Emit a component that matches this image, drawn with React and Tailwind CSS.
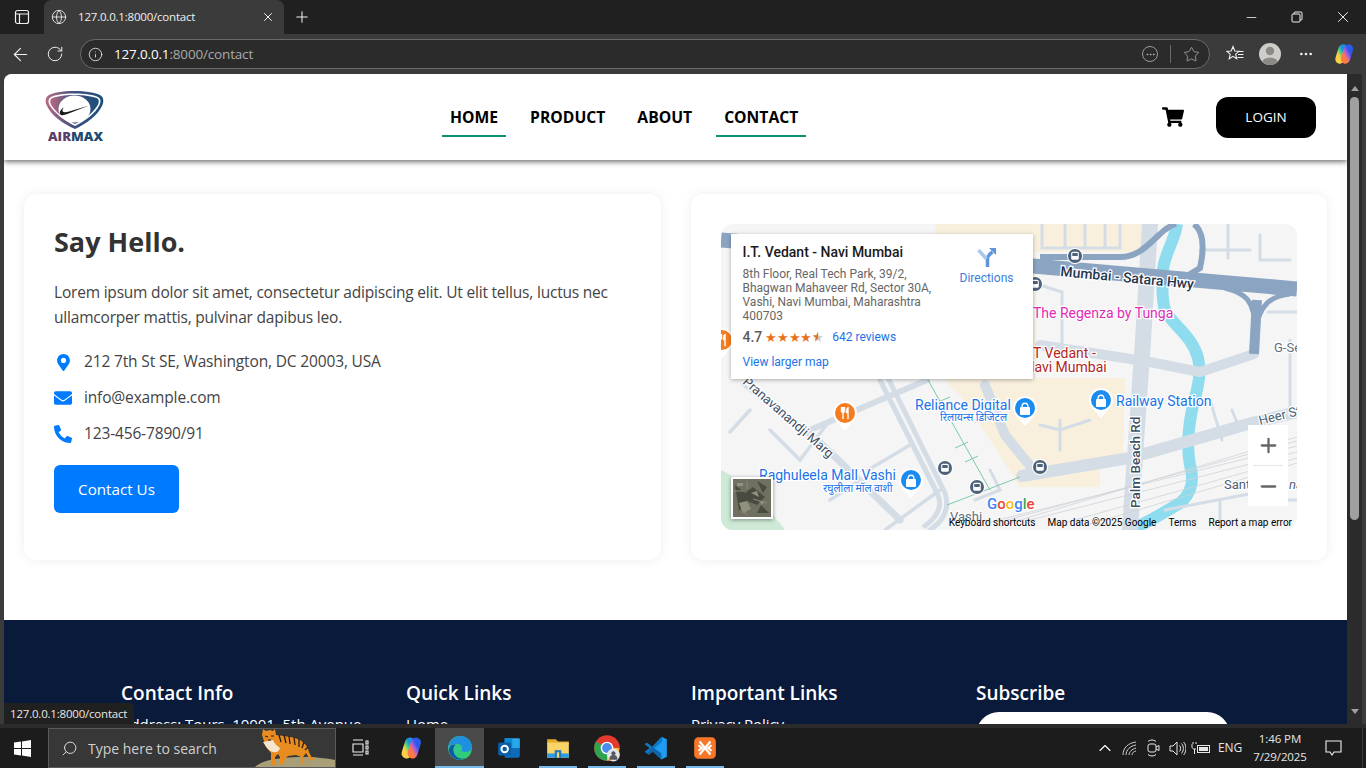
import React from 'react';
import { FaMapMarkerAlt, FaEnvelope, FaPhoneAlt, FaShoppingCart } from 'react-icons/fa';
import { Globe, X, Plus, ArrowLeft, RotateCw, Info, Star, MoreHorizontal, Minus, ChevronUp, Search } from 'lucide-react';

const uiFont = { fontFamily: '"Open Sans", sans-serif' };

function CopilotLogo({ size = 22, id = 'cop' }) {
    return (
        <svg width={size} height={size} viewBox="0 0 24 24" fill="none" strokeLinecap="round">
            <defs>
                <linearGradient id={`${id}A`} x1="0.8" y1="0" x2="0.2" y2="1">
                    <stop offset="0" stopColor="#1b8fe0" />
                    <stop offset="0.45" stopColor="#3ccf8a" />
                    <stop offset="1" stopColor="#f7d147" />
                </linearGradient>
                <linearGradient id={`${id}B`} x1="0.8" y1="0" x2="0.2" y2="1">
                    <stop offset="0" stopColor="#2a5be8" />
                    <stop offset="0.5" stopColor="#b25be0" />
                    <stop offset="1" stopColor="#ff7a45" />
                </linearGradient>
            </defs>
            <path d="M11 6.500 7.500 17.500" stroke={`url(#${id}A)`} strokeWidth="10" />
            <path d="M17 6.500 13.500 17.500" stroke={`url(#${id}B)`} strokeWidth="10" />
        </svg>
    );
}

function EdgeLogo() {
    return (
        <svg width="26" height="26" viewBox="0 0 24 24">
            <defs>
                <linearGradient id="edgeA" x1="0" y1="0" x2="1" y2="1">
                    <stop offset="0" stopColor="#35c1a0" />
                    <stop offset="1" stopColor="#2fd06a" />
                </linearGradient>
            </defs>
            <circle cx="12" cy="12" r="11" fill="url(#edgeA)" />
            <path d="M1 12C2 5 8 1 12 1c6 0 11 4 11 10 0 3-3 4.500-6 4.500-2 0-4-.7-4-1.500 2-1 1-6-4-6-4 0-7 2-8 4z" fill="#1f8fe0" />
            <path d="M8 9c-3 2-3 8 1 11 1.500 1.200 4 2.500 8 1.500-5 3-13 1-15-6C1 12 4 8 8 9z" fill="#0c59a4" />
        </svg>
    );
}

function OutlookLogo() {
    return (
        <svg width="26" height="26" viewBox="0 0 24 24">
            <path d="M8 3h13a1 1 0 0 1 1 1v8H8z" fill="#28a8ea" />
            <path d="M8 12h14v7a2 2 0 0 1-2 2H8z" fill="#0f6cbd" />
            <path d="M8 3h7v9H8z" fill="#0a8ad6" />
            <rect x="2" y="7" width="12" height="12" rx="1.500" fill="#0a5fa8" />
            <circle cx="8" cy="13" r="3" fill="none" stroke="#fff" strokeWidth="1.800" />
        </svg>
    );
}

function FolderLogo() {
    return (
        <svg width="26" height="26" viewBox="0 0 24 24">
            <path d="M2 4h8l2 2h10v3H2z" fill="#e5a92e" />
            <rect x="2" y="7" width="20" height="14" fill="#f8d568" />
            <rect x="2" y="17" width="20" height="4" fill="#2f9be0" />
            <rect x="9" y="14" width="6" height="7" fill="#1f78c4" />
            <rect x="11" y="16" width="2" height="5" fill="#f8d568" />
        </svg>
    );
}

function ChromeLogo() {
    return (
        <svg width="28" height="28" viewBox="0 0 24 24">
            <circle cx="12" cy="12" r="11" fill="#e33b2e" />
            <path d="M12 12 2.500 6.500A11 11 0 0 0 12 23z" fill="#2fa34f" />
            <path d="M12 12h10.500A11 11 0 0 1 12 23z" fill="#fbc02d" />
            <circle cx="12" cy="12" r="5.400" fill="#fff" />
            <circle cx="12" cy="12" r="4.200" fill="#4a8bf0" />
            <circle cx="17.500" cy="18" r="5.500" fill="#e2e4e8" />
            <circle cx="17.500" cy="16.500" r="1.800" fill="#55585e" />
            <path d="M14 22c0-3 1.500-4 3.500-4s3.500 1 3.500 4z" fill="#55585e" />
        </svg>
    );
}

function VsCodeLogo() {
    return (
        <svg width="26" height="26" viewBox="0 0 24 24">
            <path d="M17 1.500 22 4v16l-5 2.500L6.500 13 17 5.500z" fill="#1f9cf0" />
            <path d="M17 1.500V7l-8.500 6.500L3.500 17 1.500 15.500 6 12 1.500 8.500l2-1.500 5 3.800z" fill="#0b7ac4" />
            <path d="M17 22.500V17l-8.500-6.500-5 6.500 2 1.500 3.500-3z" fill="#0d66ad" />
        </svg>
    );
}

function XamppLogo() {
    return (
        <svg width="26" height="26" viewBox="0 0 24 24">
            <rect x="2" y="2" width="20" height="20" rx="4" fill="#f9772b" />
            <path d="M7 6l5 6 5-6M7 18l5-6 5 6M6 9.500l3 2.500-3 2.500M18 9.500 15 12l3 2.500" fill="none" stroke="#fff" strokeWidth="2" />
        </svg>
    );
}

function Tiger() {
    return (
        <svg width="80" height="40" viewBox="0 0 80 40">
            <path d="M0 40C8 32 30 30 50 30c14 0 24 2 30 3v7z" fill="#a89f78" />
            <path d="M7 8l1-6 3 2 4-1 3 1 2-2 1 6c8 1 18 2 24 5 5 3 8 7 9 12l3 6 3-1-1 3-4 0-4-7-3 4 1 6 2 1H47l-1-7-5-2-8 1-3 3-1 4 2 1H25l0-7-2-3-3 3 0 7h2l0 1h-6l0-12-5-6z" fill="#e88c22" />
            <path d="M8 15c3 5 6 9 10 10 4 1 6-1 7-4-3-2-6-5-7-8z" fill="#f5e6d2" />
            <path d="M24 8l2 7M29 8l2 8M34 9l1 8M39 10l1 8M44 12l0 8M49 15l-2 6M53 20l-3 3" stroke="#2a1c10" strokeWidth="1.300" fill="none" />
            <path d="M10 9l3 1M16 9l3 0M13 13l3 0" stroke="#2a1c10" strokeWidth="1" />
        </svg>
    );
}

function BrowserChrome() {
    return (
        <>
            <div className="flex h-[34px] shrink-0 items-end bg-[#202020] text-[#f0f0f0]">
                <div className="flex h-[34px] w-[44px] shrink-0 items-center justify-center">
                    <svg width="16" height="16" viewBox="0 0 16 16" fill="none" stroke="#f0f0f0" strokeWidth="1.200">
                        <rect x="1.500" y="1.500" width="13" height="13" rx="2" />
                        <path d="M1.500 5h13M5.500 5v9.500" />
                    </svg>
                </div>
                <div className="flex h-[34px] w-[240px] shrink-0 items-center rounded-t-lg bg-[#3b3b3b] pl-[7px] pr-[9px]">
                    <Globe size={16} strokeWidth={1.300} />
                    <span className="ml-[11px] flex-1 pb-[1px] text-[11.5px] tracking-[-0.2px]">127.0.0.1:8000/contact</span>
                    <X size={14} strokeWidth={1.700} />
                </div>
                <div className="flex h-[34px] w-[36px] items-center justify-center">
                    <Plus size={18} strokeWidth={1.400} />
                </div>
                <div className="flex-1" />
                <div className="flex h-[34px] items-center">
                    <div className="flex w-[46px] justify-center"><Minus size={15} strokeWidth={1.300} /></div>
                    <div className="flex w-[46px] justify-center">
                        <svg width="12" height="12" viewBox="0 0 12 12" fill="none" stroke="#f0f0f0">
                            <rect x="1" y="3" width="8" height="8" rx="1" />
                            <path d="M3 3V2a1 1 0 0 1 1-1h6a1 1 0 0 1 1 1v6a1 1 0 0 1-1 1H9" />
                        </svg>
                    </div>
                    <div className="flex w-[46px] justify-center"><X size={18} strokeWidth={1.300} /></div>
                </div>
            </div>
            <div className="flex h-[40px] shrink-0 items-center bg-[#3b3b3b] text-[#f0f0f0]">
                <div className="flex w-[38px] justify-center pl-[2px]"><ArrowLeft size={21} strokeWidth={1.300} /></div>
                <div className="flex w-[34px] justify-center"><RotateCw size={18} strokeWidth={1.300} /></div>
                <div className="ml-[8px] flex h-[30px] w-[1130px] items-center rounded-[15px] border border-[#6a6a6a] bg-[#2b2b2b] pl-[7px] pr-[8px]">
                    <Info size={15} strokeWidth={1.300} />
                    <span className="ml-[11px] flex-1 text-[13.5px] tracking-[-0.17px] text-[#a9a9a9]"><span className="text-white">127.0.0.1</span>:8000/contact</span>
                    <div className="flex h-[16px] w-[16px] items-center justify-center rounded-full border border-[#9a9a9a]">
                        <MoreHorizontal size={11} className="text-[#b0b0b0]" />
                    </div>
                    <div className="mx-[12px] h-[18px] w-px bg-[#6a6a6a]" />
                    <Star size={17} strokeWidth={1.100} className="mr-[1px] text-[#b0b0b0]" />
                </div>
                <div className="flex flex-1 items-center">
                    <div className="flex w-[48px] justify-center pl-[2px]">
                        <svg width="18" height="18" viewBox="0 0 18 18" fill="none" stroke="#f0f0f0" strokeWidth="1.100">
                            <path d="M7 1.500 8.800 6l4.200.3-3.300 2.900 1 4.600L7 11.300l-3.800 2.500 1-4.600L1 6.300 5.200 6z" />
                            <path d="M13 6.500h4.500M12 9.500h5.500M11.500 12.500h6" />
                        </svg>
                    </div>
                    <div className="ml-[1px] flex h-[22px] w-[22px] items-center justify-center overflow-hidden rounded-full bg-[#cfcdc9]">
                        <svg width="22" height="22" viewBox="0 0 22 22">
                            <circle cx="11" cy="8" r="4.200" fill="#8c8a86" />
                            <ellipse cx="11" cy="20" rx="8" ry="5.500" fill="#8c8a86" />
                        </svg>
                    </div>
                    <div className="flex w-[50px] justify-center"><MoreHorizontal size={16} strokeWidth={2} /></div>
                    <div className="flex w-[26px] justify-center"><CopilotLogo id="copTop" /></div>
                </div>
            </div>
        </>
    );
}

function NavItem({ label, active }) {
    return (
        <a className={`block border-b-2 px-[8px] pb-[5px] pt-[7px] text-[15.7px] font-bold text-black ${active ? 'border-[#0d9276]' : 'border-transparent'}`}>
            {label}
        </a>
    );
}

function AirMaxLogo() {
    return (
        <svg width="62" height="54" viewBox="0 0 62 54">
            <defs>
                <linearGradient id="shield" x1="0" y1="0" x2="1" y2="0">
                    <stop offset="0" stopColor="#b86a80" />
                    <stop offset="0.5" stopColor="#3f4f80" />
                    <stop offset="1" stopColor="#1c4f7c" />
                </linearGradient>
            </defs>
            <path d="M30 1C42 1 52 3 56 5 60 7 60 12 58 16 54 25 42 34 31 39 19 34 7 25 3 16 1 12 1 7 5 5 9 3 18 1 30 1z" fill="url(#shield)" />
            <path d="M30 3.500C41 3.500 50 5 54 7 57 8.500 57 12 55.500 15 52 23 41 31 31 36 21 31 10 23 5.500 15 4 12 4 8.500 7 7 11 5 19 3.500 30 3.500z" fill="#fff" />
            <path d="M30 5C40 5 49 6.500 52.500 8 55.500 9.500 55 12 54 14.500 50 22 41 29 31 34 21 29 11 22 7 14.500 6 12 5.500 9.500 8.500 8 12 6.500 20 5 30 5z" fill="url(#shield)" />
            <ellipse cx="30.500" cy="19" rx="16" ry="13.500" fill="#fff" />
            <path d="M45 15.500 25 21.500c-4 1.100-6.500 1-6.500-1 0-1.300.8-2.500 2-3.500-3 1.500-5.500 4.500-4.500 7 .8 1.800 4 1.500 8-.2z" fill="#1d1d1f" />
            <text x="4" y="51" fontSize="11.500" fontWeight="800" fontFamily="'Open Sans', sans-serif" textLength="55" lengthAdjust="spacingAndGlyphs">
                <tspan fill="#5b3f68">AIR</tspan><tspan fill="#21486e">MAX</tspan>
            </text>
        </svg>
    );
}

function Navbar() {
    return (
        <div className="relative z-10 flex h-[86px] items-center bg-white shadow-[0_2px_5px_rgba(0,0,0,0.55)]">
            <div className="ml-[40px] flex w-[398px] shrink-0 items-center"><AirMaxLogo /></div>
            <nav className="flex items-center gap-[16px] pt-[2px]">
                <NavItem label="HOME" active />
                <NavItem label="PRODUCT" />
                <NavItem label="ABOUT" />
                <NavItem label="CONTACT" active />
            </nav>
            <div className="flex-1" />
            <FaShoppingCart size={22} className="text-black" />
            <button className="ml-[32px] mr-[31px] h-[41px] w-[100px] rounded-[12px] bg-black text-[13.5px] text-white">LOGIN</button>
        </div>
    );
}

function ContactRow({ icon, children }) {
    return (
        <div className="flex h-[36px] items-center text-[15.5px] tracking-[-0.15px] text-[#444]">
            <span className="flex w-[30px] text-[#007bff]">{icon}</span>
            {children}
        </div>
    );
}

function ContactCard() {
    return (
        <div className="rounded-[12px] bg-white p-[30px] shadow-[0_0_12px_rgba(0,0,0,0.07)]">
            <h2 className="text-[27px] font-bold leading-[36px] text-[#333]">Say Hello.</h2>
            <p className="mt-[20px] text-[15.5px] leading-[25px] tracking-[-0.2px] text-[#444]">
                Lorem ipsum dolor sit amet, consectetur adipiscing elit. Ut elit tellus, luctus nec ullamcorper mattis, pulvinar dapibus leo.
            </p>
            <div className="mt-[14px]">
                <ContactRow icon={<FaMapMarkerAlt size={17} className="ml-[1px]" />}>212 7th St SE, Washington, DC 20003, USA</ContactRow>
                <ContactRow icon={<FaEnvelope size={18} />}>info@example.com</ContactRow>
                <ContactRow icon={<FaPhoneAlt size={18} />}>123-456-7890/91</ContactRow>
            </div>
            <button className="mt-[13px] h-[48px] w-[125px] rounded-[6px] bg-[#007bff] text-[15.2px] text-white">Contact Us</button>
        </div>
    );
}

function Pin({ x, y, color, kind }) {
    return (
        <g transform={`translate(${x} ${y})`}>
            <path d="M0 13 -9 3A12 12 0 1 1 9 3z" fill="#fff" transform="translate(0 -3)" />
            <circle cx="0" cy="-8" r="10" fill={color} />
            {kind === 'bag' ? (
                <g>
                    <rect x="-5" y="-9" width="10" height="8" rx="1" fill="#fff" />
                    <path d="M-3-9c0-5 6-5 6 0" fill="none" stroke="#fff" strokeWidth="1.300" />
                </g>
            ) : (
                <path d="M-4-14v4c0 1 1 2 1.500 2v6h1v-6c.5 0 1.500-1 1.500-2v-4M3-14c-2 1-2 4-2 6h1.500v6h1v-12z" fill="#fff" stroke="#fff" strokeWidth="0.400" />
            )}
        </g>
    );
}

function Bus({ x, y }) {
    return (
        <g transform={`translate(${x} ${y})`}>
            <circle r="8" fill="#fff" />
            <circle r="7" fill="#4d6178" />
            <rect x="-3.800" y="-4.200" width="7.600" height="8" rx="1.500" fill="#fff" />
            <rect x="-2.700" y="-3" width="5.400" height="3" fill="#4d6178" />
        </g>
    );
}

function MapDrawing() {
    const label = { fontFamily: 'Roboto, sans-serif' };
    const halo = { paintOrder: 'stroke', stroke: '#fff', strokeWidth: 2.5 };
    return (
        <svg className="absolute inset-0" width="576" height="306" viewBox="721 224 576 306" style={label}>
            <rect x="721" y="224" width="576" height="306" fill="#f5f5f5" />
            <path d="M721 470 C745 480 770 510 785 530 H721z" fill="#ceead6" />
            <path d="M935 224H1150L1147 252H1035V378H1125L1123 460 1100 470V487H1020L990 440 960 395 945 380z" fill="#f8f0dd" />
            <path d="M1177 224C1175 240 1164 255 1163 270 1162 285 1162 300 1165 310 1172 325 1192 335 1198 358 1202 375 1197 390 1192 410 1188 430 1187 450 1190 465 1195 482 1190 495 1180 503 1165 512 1145 524 1130 530" fill="none" stroke="#8fdcee" strokeWidth="12" />
            <g fill="none" stroke="#d4dde6" strokeLinecap="round">
                <path d="M1150 224 1143 340 1130 530" strokeWidth="16" />
                <path d="M1040 345 1150 362 1200 372 1254 354" strokeWidth="10" />
                <path d="M1022 476 1130 458 1248 424 1297 412" strokeWidth="12" />
                <path d="M985 385 1005 435 1035 472" strokeWidth="10" />
                <path d="M880 380 937 493Q946 510 925 526" strokeWidth="5" />
                <path d="M888 378 945 493Q952 515 930 530" strokeWidth="5" />
                <path d="M810 430 927 380" strokeWidth="6" />
                <path d="M830 452 900 520" strokeWidth="7" />
                <path d="M742 384 830 452" strokeWidth="3" />
                <path d="M770 430 800 460 830 420M750 410 730 432M820 440 850 470M830 500 860 480M868 470 910 445M885 530 940 490" strokeWidth="3.500" />
                <path d="M1042 224V248H1120V224M1065 224V248M1085 224V248M1105 224V248M1040 285 1062 292V345M1200 250H1250M1260 235V260H1290M1228 224V258" strokeWidth="3" />
                <path d="M1210 400 1222 440M1232 410 1240 430M1090 420 1060 430 1040 425M1060 420V450M1220 500V530M1270 500H1297M1165 510 1270 490" strokeWidth="3" />
                <path d="M990 470 1000 490 975 500M1290 340V412M1268 312H1297" strokeWidth="3" />
            </g>
            <g fill="none" stroke="#cfd3d8" strokeWidth="0.800">
                <path d="M1000 526 1297 437M1000 522 1297 441M990 522 1297 446M1030 520 1297 452M1060 524 1297 458M1090 524 1297 463" />
            </g>
            <g fill="none" stroke="#8ba4c2" strokeLinecap="butt">
                <path d="M721 240 1033 266 1297 289" strokeWidth="15" />
                <path d="M1257 300 1254 354" strokeWidth="10" />
                <path d="M1225 288C1245 293 1255 300 1255 330M1290 294C1270 296 1260 305 1255 330" strokeWidth="5" />
                <path d="M1040 257H1120C1138 257 1148 245 1160 234 1164 230 1170 226 1176 224M1194 224C1204 232 1204 250 1200 268L1190 274" strokeWidth="6" />
            </g>
            <path d="M928 380 990 490M947 505 1020 477M938 402 950 397M955 448 968 442M965 462 978 456" fill="none" stroke="#7ccaa9" strokeWidth="1" />
            <text x="1060" y="276" transform="rotate(5.500 1060 276)" fontSize="14" fontWeight="500" fill="#25364f" style={halo}>Mumbai - Satara Hwy</text>
            <text x="1033" y="318" fontSize="14" fill="#e22bb6" style={halo}>The Regenza by Tunga</text>
            <text x="1033" y="358" fontSize="14" fill="#b3261e" style={halo}>T Vedant -</text>
            <text x="1031" y="372" fontSize="14" fill="#b3261e" style={halo}>lavi Mumbai</text>
            <text x="1274" y="352" fontSize="13" fill="#5f6f80" style={halo}>G-Se</text>
            <text x="915" y="410" fontSize="14" fill="#1a73e8" style={halo}>Reliance Digital</text>
            <text x="940" y="421" fontSize="10.500" fill="#1a73e8" style={halo} fontFamily="'Noto Sans CJK SC', 'Noto Sans', sans-serif">रिलायन्स डिजिटल</text>
            <text x="1116" y="406" fontSize="14" fill="#1a73e8" style={halo}>Railway Station</text>
            <text x="759" y="480" fontSize="14" fill="#1a73e8" style={halo}>Raghuleela Mall Vashi</text>
            <text x="823" y="492" fontSize="10.500" fill="#1a73e8" style={halo} fontFamily="'Noto Sans CJK SC', 'Noto Sans', sans-serif">रघुलीला मॉल वाशी</text>
            <text x="742" y="383" transform="rotate(41 742 383)" fontSize="13" fill="#3e4e62" style={halo}>Pranavanandji Marg</text>
            <text x="1140" y="508" transform="rotate(-90 1140 508)" fontSize="13.500" fontWeight="500" fill="#3e4e62" style={halo}>Palm Beach Rd</text>
            <text x="1224" y="489" fontSize="13" fill="#4d5f75" style={halo}>Sant</text>
            <text x="1289" y="489" fontSize="13" fill="#4d5f75" fontStyle="italic" style={halo}>na</text>
            <text x="1260" y="425" transform="rotate(-14 1260 425)" fontSize="13" fill="#4d5f75" style={halo}>Heer St</text>
            <text x="950" y="521" fontSize="13" fill="#5f6f80" style={halo}>Vashi</text>
            <text x="987" y="509" fontSize="15" fontWeight="500" style={halo}>
                <tspan fill="#4285f4">G</tspan><tspan fill="#ea4335">o</tspan><tspan fill="#fbbc05">o</tspan><tspan fill="#4285f4">g</tspan><tspan fill="#34a853">l</tspan><tspan fill="#ea4335">e</tspan>
            </text>
            <Pin x={845} y={421} color="#f57c1f" kind="food" />
            <Pin x={1025} y={416} color="#1a8cf0" kind="bag" />
            <Pin x={1101} y={408} color="#1a8cf0" kind="bag" />
            <Pin x={911} y={488} color="#1a8cf0" kind="bag" />
            <Pin x={722} y={348} color="#f57c1f" kind="food" />
            <Bus x={1075} y={256} />
            <Bus x={1035} y={284} />
            <Bus x={945} y={468} />
            <Bus x={977} y={487} />
            <Bus x={1040} y={467} />
        </svg>
    );
}

function StarsRow() {
    return (
        <span className="relative ml-[3px] inline-block text-[13px] leading-none tracking-[-0.4px] text-[#e7711b]">
            ★★★★<span className="relative text-[#c9c9c9]">★<span className="absolute left-0 top-0 w-[6px] overflow-hidden text-[#e7711b]">★</span></span>
        </span>
    );
}

function InfoWindow() {
    return (
        <div className="absolute left-[10px] top-[10px] flex h-[145px] w-[302px] bg-white pl-[12px] pt-[10px] shadow-[0_1px_4px_rgba(0,0,0,0.3)]" style={{ fontFamily: 'Roboto, sans-serif' }}>
            <div className="w-[198px]">
                <div className="text-[14px] font-medium leading-[17px] text-[#1a1a1a]">I.T. Vedant - Navi Mumbai</div>
                <div className="mt-[6px] w-[192px] text-[12px] leading-[14px] text-[#666]">8th Floor, Real Tech Park, 39/2, Bhagwan Mahaveer Rd, Sector 30A, Vashi, Navi Mumbai, Maharashtra 400703</div>
                <div className="mt-[6px] flex h-[16px] items-center text-[14px] font-medium text-[#5b5b5b]">
                    4.7<StarsRow /><span className="ml-[9px] text-[12px] font-normal text-[#1a73e8]">642 reviews</span>
                </div>
                <div className="mt-[8px] text-[12px] text-[#1a73e8]">View larger map</div>
            </div>
            <div className="flex flex-1 flex-col items-center pt-[3px] text-[12px] text-[#3b7ddd]">
                <svg width="20" height="20" viewBox="0 0 20 20" fill="none" stroke="#5d94dc" strokeWidth="3.500">
                    <path d="M10.500 20v-8c0-3 2-5 5-7" />
                    <path d="M12 1h7v7z" fill="#5d94dc" stroke="none" />
                    <path d="M9.500 12 1.500 3" stroke="#a9c8ef" strokeWidth="3.500" />
                </svg>
                <span className="mt-[2px]">Directions</span>
            </div>
        </div>
    );
}

function GoogleMap() {
    return (
        <div className="relative h-[306px] overflow-hidden rounded-[12px]">
            <MapDrawing />
            <InfoWindow />
            <div className="absolute left-[10px] top-[253px] h-[42px] w-[42px] border-2 border-white bg-[#6b6a5c] shadow-[0_1px_4px_rgba(0,0,0,0.4)]">
                <svg width="38" height="38" viewBox="0 0 38 38">
                    <rect width="38" height="38" fill="#6f7060" />
                    <path d="M2 6l10 8 8-6 12 10-8 8-10-4-8 10zM24 2l10 6-4 6zM28 26l8 8H24z" fill="#4a4b40" />
                    <path d="M6 24l8-2 4 8-8 4zM18 14l6-2 2 6zM4 4h6v3H4zM26 22l5 1-2 3z" fill="#92917f" />
                    <path d="M0 12h10M14 2v8M20 20l14 4M8 30l6 6" stroke="#8b8a78" strokeWidth="1" />
                </svg>
            </div>
            <div className="absolute right-[9px] top-[201px] flex h-[81px] w-[40px] flex-col items-center bg-white text-[#666]">
                <div className="flex h-[40px] items-center justify-center"><Plus size={23} strokeWidth={2.400} /></div>
                <div className="h-px w-[30px] bg-[#e6e6e6]" />
                <div className="flex h-[40px] items-center justify-center"><Minus size={23} strokeWidth={2.400} /></div>
            </div>
            <div className="absolute bottom-[1px] right-0 flex h-[14px] items-center gap-[12px] pr-[5px] text-[10px] text-black" style={{ fontFamily: 'Roboto, sans-serif' }}>
                <span>Keyboard shortcuts</span>
                <span>Map data ©2025 Google</span>
                <span>Terms</span>
                <span>Report a map error</span>
            </div>
        </div>
    );
}

function Footer() {
    const cols = [
        ['Contact Info', 'Address: Tours, 10001, 5th Avenue'],
        ['Quick Links', 'Home'],
        ['Important Links', 'Privacy Policy'],
    ];
    return (
        <footer className="bg-[#0a1a3a] pt-[60px] text-white">
            <div className="ml-[117px] grid h-[300px] grid-cols-[repeat(4,285px)]">
                {cols.map(([title, first]) => (
                    <div key={title}>
                        <h4 className="text-[19px] font-semibold leading-[27px]">{title}</h4>
                        <p className="mt-[6px] text-[15px] tracking-[-0.05px]">{first}</p>
                    </div>
                ))}
                <div>
                    <h4 className="text-[19px] font-semibold leading-[27px]">Subscribe</h4>
                    <div className="mt-[5px] h-[46px] w-[254px] rounded-[23px] bg-white" />
                </div>
            </div>
        </footer>
    );
}

function Scrollbar() {
    return (
        <div className="flex w-[15px] shrink-0 flex-col items-center bg-[#2b2b2b]">
            <div className="flex h-[23px] items-end justify-center pb-[6px]">
                <div className="h-0 w-0 border-x-[4px] border-b-[5px] border-x-transparent border-b-[#a0a0a0]" />
            </div>
            <div className="h-[423px] w-[9px] rounded-full bg-[#a0a0a0]" />
            <div className="flex flex-1 items-end justify-center pb-[10px]">
                <div className="h-0 w-0 border-x-[4px] border-t-[5px] border-x-transparent border-t-[#a0a0a0]" />
            </div>
        </div>
    );
}

function TaskIcon({ children, active, line }) {
    return (
        <div className={`relative flex h-[40px] w-[49px] shrink-0 items-center justify-center ${active ? 'bg-[#4a4a4a]' : ''}`}>
            {children}
            {line && <div className={`absolute bottom-0 h-[2px] bg-[#76b9ed] ${active ? 'w-full' : 'w-[38px]'}`} />}
        </div>
    );
}

function TraySlot({ children }) {
    return <div className="flex w-[24px] shrink-0 justify-center">{children}</div>;
}

function Taskbar() {
    return (
        <div className="flex h-[40px] shrink-0 items-center bg-[#1c1c1c] text-white">
            <div className="flex w-[48px] shrink-0 justify-center pr-[4px]">
                <svg width="17" height="17" viewBox="0 0 17 17" fill="#fff">
                    <path d="M0 2.500 7 1.500V8H0zM8 1.400 17 0V8H8zM0 9h7v6.500L0 14.500zM8 9h9v8l-9-1.400z" />
                </svg>
            </div>
            <div className="relative flex h-[40px] w-[288px] shrink-0 items-center overflow-hidden border border-[#5a5a5a] bg-[#373737] pl-[12px]">
                <Search size={17} strokeWidth={1.300} className="-scale-x-100 text-[#e8e8e8]" />
                <span className="ml-[10px] text-[14px] text-[#cfcfcf]">Type here to search</span>
                <div className="absolute bottom-0 right-0"><Tiger /></div>
            </div>
            <div className="w-[1px] shrink-0" />
            <TaskIcon>
                <div className="pr-[4px]">
                    <svg width="18" height="18" viewBox="0 0 18 18" fill="none" stroke="#f0f0f0" strokeWidth="1.100">
                        <path d="M2 1h10M2 16h10M2 5h10v8H2zM15 2h2v3h-2zM15 7h2v3h-2zM15 12h2v3h-2z" />
                    </svg>
                </div>
            </TaskIcon>
            <TaskIcon><CopilotLogo size={24} id="copBar" /></TaskIcon>
            <TaskIcon active line><EdgeLogo /></TaskIcon>
            <TaskIcon><OutlookLogo /></TaskIcon>
            <TaskIcon line><FolderLogo /></TaskIcon>
            <TaskIcon line><ChromeLogo /></TaskIcon>
            <TaskIcon line><VsCodeLogo /></TaskIcon>
            <TaskIcon line><XamppLogo /></TaskIcon>
            <div className="flex-1" />
            <TraySlot><ChevronUp size={20} strokeWidth={1.300} /></TraySlot>
            <TraySlot>
                <svg width="15" height="15" viewBox="0 0 15 15" fill="none" stroke="#cfcfcf" strokeWidth="1">
                    <path d="M1 14C1 7 6 2 14 1M4 14c0-5 4-9 10-10M7 14c0-3 3-6 7-7M10 14c0-2 2-4 4-4" />
                </svg>
            </TraySlot>
            <TraySlot>
                <svg width="14" height="18" viewBox="0 0 14 18" fill="none" stroke="#e6e6e6" strokeWidth="1">
                    <rect x="2" y="5" width="8" height="8" rx="2" />
                    <path d="M10 8l3-1.500v5L10 10M2 2.500c2-2 6-2 8 0M2 15.500c2 2 6 2 8 0" />
                </svg>
            </TraySlot>
            <TraySlot>
                <svg width="17" height="15" viewBox="0 0 17 15" fill="none" stroke="#e6e6e6" strokeWidth="1">
                    <path d="M1 5h3l4-4v13L4 10H1zM10.500 4.500c1.500 1.500 1.500 4.500 0 6M12.500 2.500c2.500 3 2.500 7 0 10M14.700 1c3 4 3 9 0 13" />
                </svg>
            </TraySlot>
            <TraySlot>
                <svg width="20" height="13" viewBox="0 0 20 13" fill="none" stroke="#e6e6e6" strokeWidth="1">
                    <rect x="6.500" y="3.500" width="12" height="7" />
                    <rect x="8" y="5" width="9" height="4" fill="#e6e6e6" stroke="none" />
                    <path d="M1 2v3c0 1 1 2 2 2h2M2 0v2M5 0v2M3.500 7v5" />
                </svg>
            </TraySlot>
            <span className="w-[34px] text-center text-[12px] tracking-[-0.2px] text-[#e6e6e6]">ENG</span>
            <div className="ml-[3px] w-[60px] text-center text-[11.5px] leading-[18px] tracking-[-0.1px] text-[#e6e6e6]">
                <div>1:46 PM</div>
                <div>7/29/2025</div>
            </div>
            <div className="flex w-[52px] justify-center pr-[6px]">
                <svg width="17" height="16" viewBox="0 0 17 16" fill="none" stroke="#f0f0f0" strokeWidth="1.100">
                    <path d="M1 1h15v11H9l-2 3-2-3H1z" />
                </svg>
            </div>
            <div className="h-[40px] w-[4px] border-l border-[#3a3a3a]" />
        </div>
    );
}

export default function App() {
    return (
        <div className="flex h-[768px] w-[1366px] flex-col overflow-hidden bg-[#1c1c1c]" style={uiFont}>
            <BrowserChrome />
            <div className="relative flex h-[650px] shrink-0 bg-[#3b3b3b] px-[4px]">
                <div className="flex-1 overflow-hidden rounded-tl-lg bg-white">
                    <Navbar />
                    <div className="grid grid-cols-2 gap-[30px] px-[20px] pb-[60px] pt-[34px]">
                        <ContactCard />
                        <div className="rounded-[12px] bg-white p-[30px] shadow-[0_0_12px_rgba(0,0,0,0.07)]">
                            <GoogleMap />
                        </div>
                    </div>
                    <Footer />
                </div>
                <Scrollbar />
                <div className="absolute bottom-0 left-[4px] flex h-[21px] w-[130px] items-center rounded-tr bg-[#202020] pl-[6px] text-[11.5px] tracking-[-0.2px] text-[#e8e8e8]">127.0.0.1:8000/contact</div>
            </div>
            <div className="h-[4px] shrink-0 bg-[#2b2b2b]" />
            <Taskbar />
        </div>
    );
}
